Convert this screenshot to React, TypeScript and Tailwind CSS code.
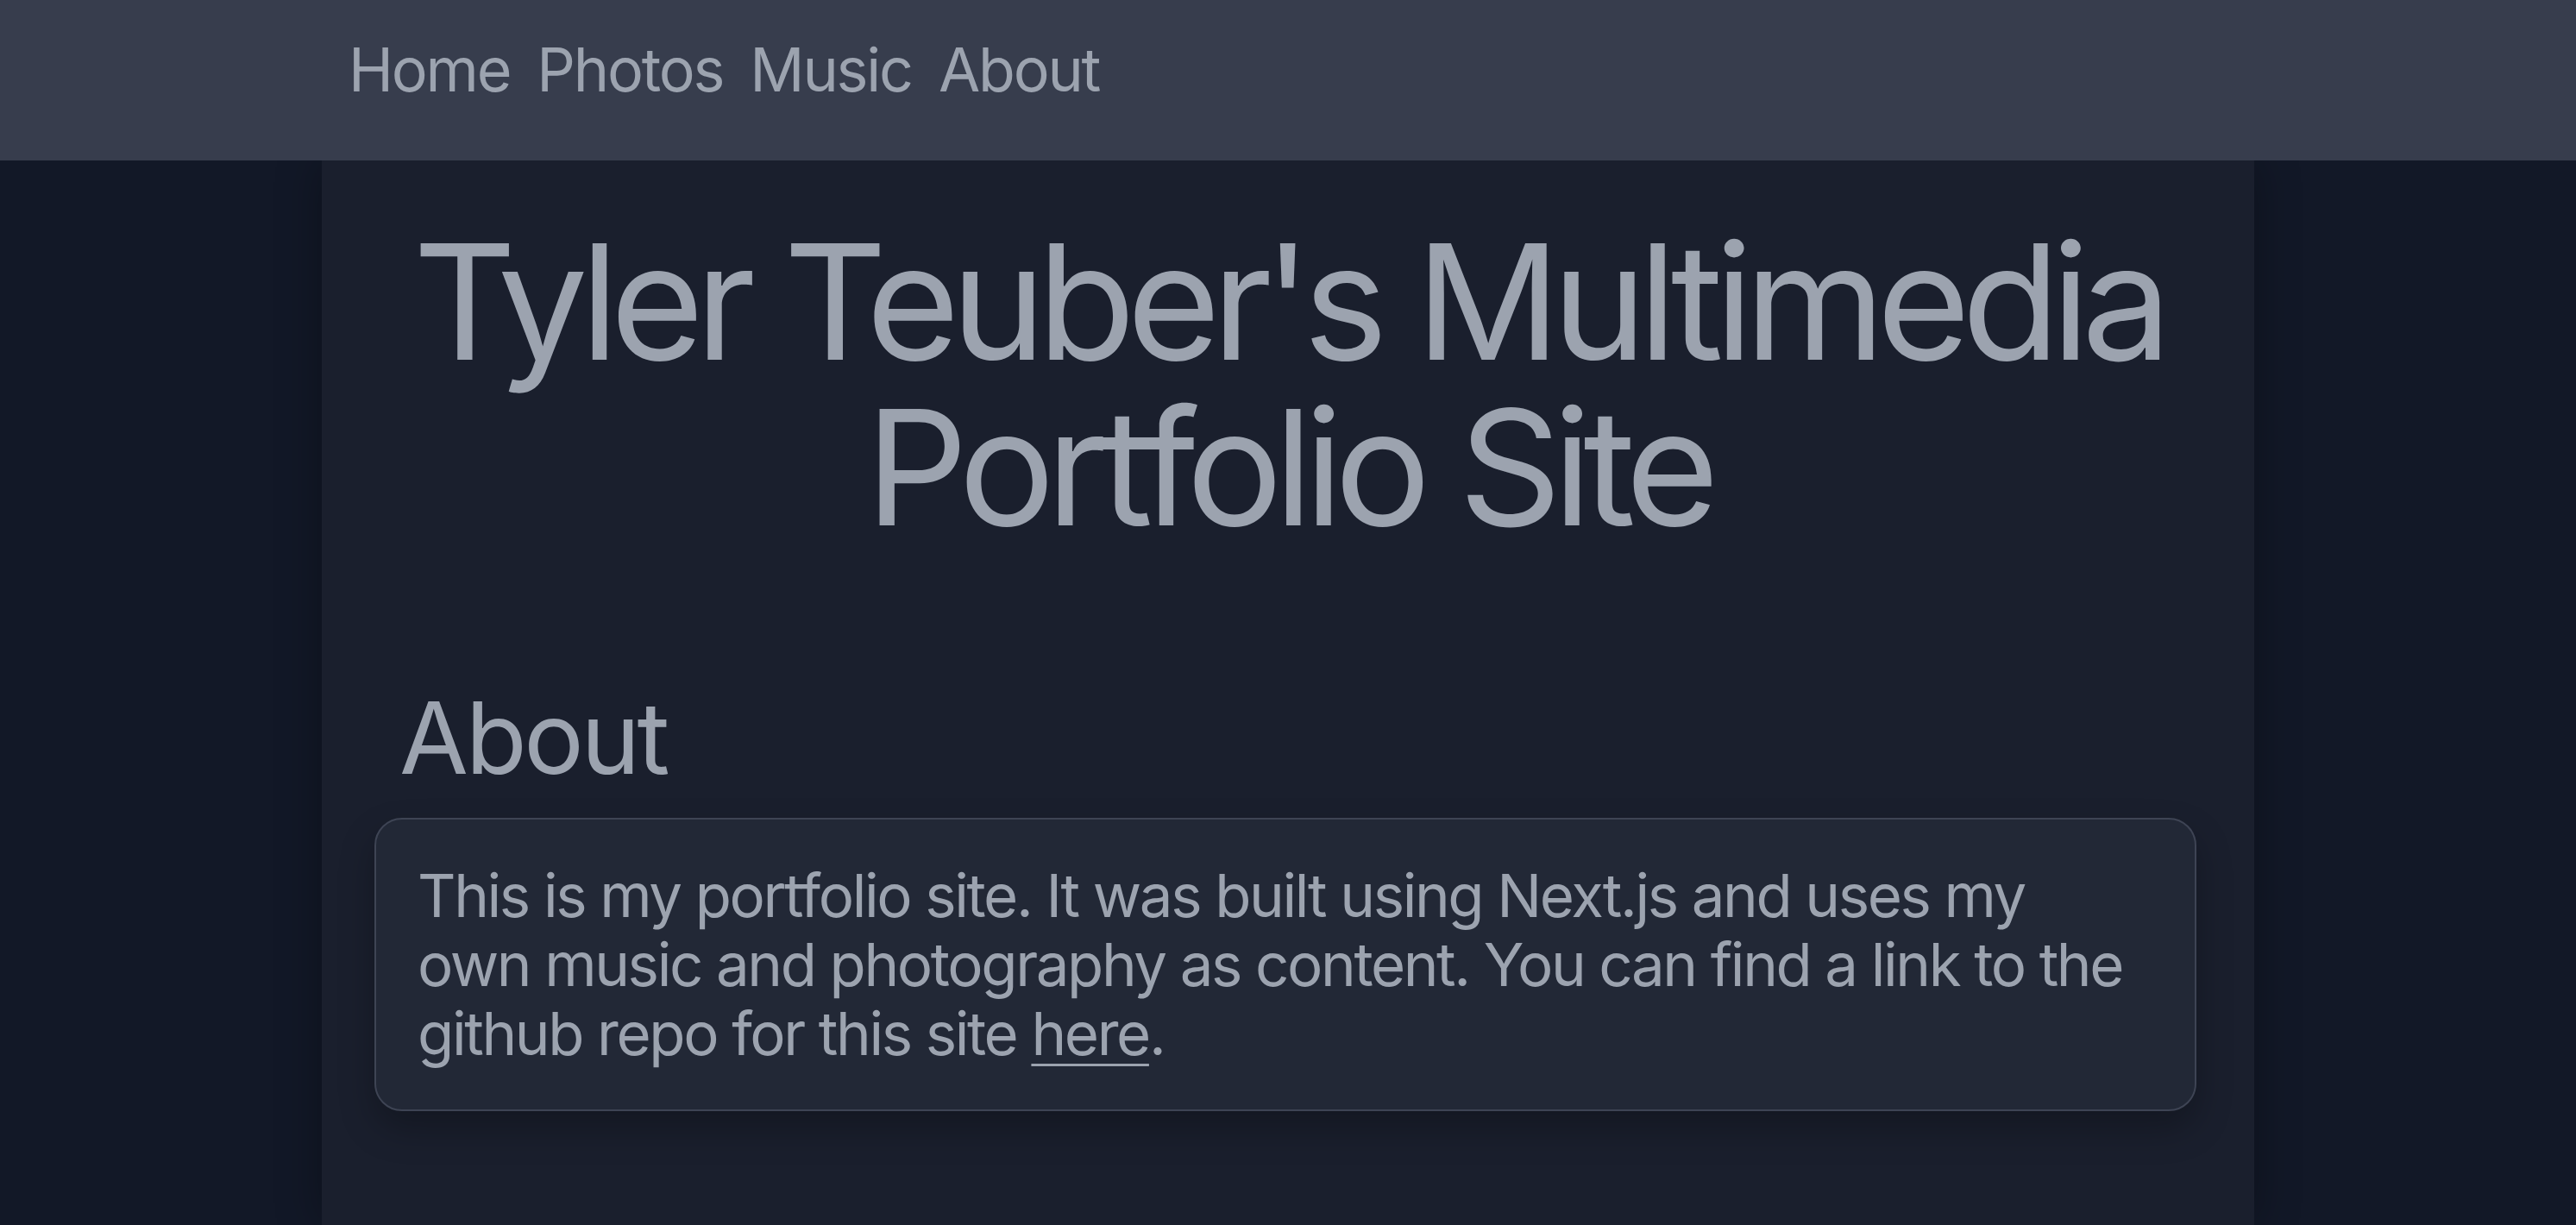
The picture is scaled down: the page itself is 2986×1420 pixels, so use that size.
import React from "react";

export default function App() {
  return (
    <div className="min-h-screen overflow-hidden bg-[#121827] text-[#9ca3af] font-['Inter','Noto_Sans',sans-serif]">
      <header className="relative z-10 h-[186px] w-full bg-[#373d4d]">
        <nav className="mx-auto flex w-[2304px] gap-[31px] pl-[63px] pt-[39px] text-[70px] leading-[1.21] tracking-[-2.2px]">
          <a href="#">Home</a>
          <a href="#">Photos</a>
          <a href="#">Music</a>
          <a href="#">About</a>
        </nav>
      </header>
      <main className="mx-auto min-h-[1234px] w-[2240px] bg-[#1a1f2d] pb-[80px] shadow-[0_0_50px_rgba(0,0,0,0.3)]">
        <h1 className="pt-[68px] text-center text-[186px] font-normal leading-[192px] tracking-[-10px]">
          Tyler Teuber's Multimedia
          <br />
          Portfolio Site
        </h1>
        <h2 className="mt-[157px] pl-[90px] text-[116px] font-normal leading-[120px] tracking-[-3.4px]">About</h2>
        <div className="ml-[61px] mt-[33px] w-[2112px] rounded-[32px] border-2 border-[#3e4454] bg-[#222836] py-[48px] pl-[48px] pr-[70px] text-[69px] leading-[80px] tracking-[-2.4px] shadow-[0_20px_40px_rgba(0,0,0,0.25)]">
          <p>
            This is my portfolio site. It was built using Next.js and uses my own music and photography as
            content. You can find a link to the github repo for this site{" "}
            <a href="#" className="underline decoration-[3px] underline-offset-[10px]">
              here
            </a>
            .
          </p>
        </div>
      </main>
    </div>
  );
}
